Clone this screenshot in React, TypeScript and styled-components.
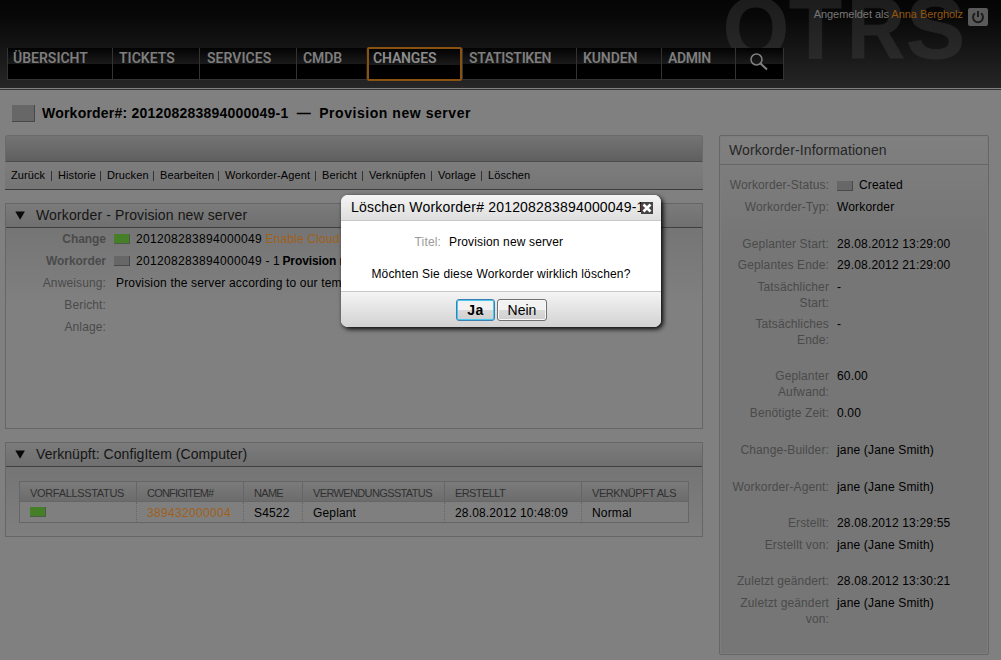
import React from 'react';
import styled, { createGlobalStyle } from 'styled-components';

const Global = createGlobalStyle`
  * { box-sizing: border-box; }
  body { margin: 0; background: #808080; font: 12px/15px "Liberation Sans", Arial, sans-serif; color: #000; overflow: hidden; }
  h1, h2, p, dl, dd, dt { margin: 0; font-weight: normal; }
`;
const Page = styled.div`width: 1001px; height: 660px; position: relative; overflow: hidden; background: #808080;`;
const Header = styled.header`
  height: 90px; padding: 48px 0 0 7px; position: relative; overflow: hidden;
  background: linear-gradient(#050505 0px, #070707 14px, #262626 88px);
  border-bottom: 1px solid #333; box-shadow: inset 0 -1px #808080;
`;
const Logo = styled.svg`position: absolute; left: 715px; top: 0; width: 286px; height: 88px;`;
const Login = styled.div`
  position: absolute; right: 13px; top: 7px; display: flex; align-items: flex-start; gap: 5px;
  color: #777; font-size: 11px; line-height: 14px; letter-spacing: -0.04px;
`;
const User = styled.span`color: #94560f;`;
const Power = styled.span`display: flex; margin-top: 1px; width: 20px; height: 18px; background: #5a5a5a; border-radius: 2px; justify-content: center; align-items: center;`;
const Nav = styled.nav`display: flex; position: relative; height: 32px; width: 777px; border: solid #333; border-width: 0 1px 1px 0;`;
const NavItem = styled.a<{ $w: number; $active?: boolean; $x?: number; $ls?: number }>`
  width: ${p => p.$w}px; height: 31px; padding: 2px 0 0 ${p => p.$x ?? 6}px;
  border-left: 1px solid #333; white-space: nowrap;
  background: linear-gradient(#020202 0, #1b1b1b 16px, #000 16px);
  color: #7e7e7e; font: 600 14px/16px Roboto, sans-serif; letter-spacing: ${p => p.$ls ?? 0}px;
  ${p => p.$active && `height: 34px; margin: -1px 0 0 1px; padding: 1px 0 0 4px; border: 2px solid #8a5210; border-radius: 2px; color: #8c8c8c; position: relative; z-index: 1;`}
`;
const Title = styled.div`display: flex; align-items: center; height: 45px; padding: 2px 0 0 12px; gap: 7px;`;
const Heading = styled.h1`font: bold 14px/18px "Liberation Sans", sans-serif; letter-spacing: 0.22px; white-space: pre; margin-top: -2px;`;
const HeadingName = styled.span`letter-spacing: 0.55px;`;
const Flag = styled.span<{ $green?: boolean; $big?: boolean }>`
  display: inline-block; flex: none; width: ${p => (p.$big ? 23 : 16)}px; height: ${p => (p.$big ? 17 : 10)}px;
  background: ${p => (p.$green ? '#458028' : '#676767')};
  border: solid ${p => (p.$green ? '#4c5a46' : '#484848')}; border-width: 0 1px 1px 0;
`;
const Columns = styled.div`display: grid; grid-template-columns: 698px 270px; column-gap: 16px; padding-left: 5px; align-items: start;`;
const Toolbar = styled.div`height: 27px; background: linear-gradient(#747474, #5f5f5f); border: solid #6a6a6a; border-width: 1px 1px 0; border-bottom: 1px solid #4c4c4c; border-radius: 3px 3px 0 0;`;
const Links = styled.div`height: 28px; display: flex; align-items: center; padding-left: 6px; background: linear-gradient(#7d7d7d, #757575); border-bottom: 1px solid #3c3c3c; font-size: 11px;`;
const Link = styled.a<{ $w: number }>`width: ${p => p.$w}px; display: flex; white-space: nowrap; align-items: center; justify-content: space-between; letter-spacing: 0.1px;
  &:not(:last-child)::after { content: ''; width: 1px; height: 10px; background: #333; margin-right: 6px; }
`;
const Widget = styled.section<{ $h: number }>`height: ${p => p.$h}px; border: 1px solid #666; margin-top: 13px; background: linear-gradient(#757575 25px, #808080 100px);`;
const WidgetHead = styled.div`
  height: 24px; display: flex; align-items: center; padding-left: 9px; gap: 10px; background: linear-gradient(#7b7b7b, #6f6f6f); border-bottom: 1px solid #404040;
  color: #151515; font-size: 14px;
`;
const Caption = styled.h2<{ $ls: number }>`font-size: 14px; letter-spacing: ${p => p.$ls}px;`;
const Facts = styled.dl`display: grid; grid-template-columns: 100px 1fr; column-gap: 8px; grid-auto-rows: 22px; line-height: 22px;`;
const Label = styled.dt<{ $bold?: boolean }>`text-align: right; padding-left: 5px; color: #4a4a4a; font-weight: ${p => (p.$bold ? 'bold' : 'normal')}; letter-spacing: ${p => (p.$bold ? -0.05 : 0.12)}px;`;
const Value = styled.dd<{ $x?: number }>`display: flex; align-items: center; gap: 6px; padding-left: ${p => p.$x || 0}px; white-space: pre; letter-spacing: 0.17px;`;
const Number = styled.span`letter-spacing: 0.32px;`;
const Strong = styled.b`letter-spacing: -0.1px; margin-left: -1px;`;
const Orange = styled.span`color: #a0601a;`;
const Table = styled.div`margin: 14px 0 0 13px; width: 670px; height: 42px; border: 1px solid #666; background: #7f7f7f;`;
const Row = styled.div<{ $head?: boolean }>`
  display: grid; grid-template-columns: 117px 107px 59px 142px 137px 1fr; height: 20px; line-height: 22px;
  ${p => p.$head && 'background: linear-gradient(#7b7b7b, #6c6c6c); border-bottom: 1px solid #666; color: #303030; font-size: 11px;'}
`;
const Cell = styled.span<{ $head?: boolean; $ls?: number }>`padding-left: 10px; height: 20px; white-space: nowrap; letter-spacing: ${p => p.$ls ?? 0.15}px;
  &:not(:last-child) { border-right: 1px ${p => (p.$head ? 'solid' : 'dotted')} #666; }
  ${p => p.$head && 'height: 19px;'}
`;
const Side = styled.aside`height: 520px; border: 1px solid #666; border-radius: 2px; background: linear-gradient(#808080, #767676 100px); box-shadow: inset 0 0 0 1px #7d7d7d;`;
const SideHead = styled.h2`height: 29px; line-height: 29px; padding-left: 9px; border-bottom: 1px solid #666; color: #262626; font-size: 14px; letter-spacing: 0.1px; margin-bottom: 13px;`;
const Info = styled.dl<{ $h: number }>`height: ${p => p.$h}px; display: grid; grid-template-columns: 109px 1fr; column-gap: 8px; line-height: 15.5px; align-items: start;`;
const Dialog = styled.div`
  position: absolute; left: 341px; top: 195px; width: 320px; height: 132px; border-radius: 7px; background: #fff;
  display: flex; flex-direction: column; box-shadow: 2px 2px 5px #000;
`;
const DialogHead = styled.div`height: 26px; display: flex; align-items: center; padding: 0 8px 1px 10px; border-radius: 7px 7px 0 0; background: linear-gradient(#f4f4f4, #dedede); border-bottom: 1px solid #c8c8c8;`;
const DialogTitle = styled.h2`width: 290px; flex: none; white-space: nowrap; font-size: 14px; letter-spacing: 0.19px;`;
const Close = styled.span`display: flex; z-index: 1; flex: none; margin-top: 2px;`;
const DialogBody = styled.div`height: 70px; padding-top: 14px;`;
const Question = styled.p`text-align: center; margin-top: 17px; letter-spacing: 0.16px;`;
const Field = styled.dl`display: grid; grid-template-columns: 100px 1fr; column-gap: 8px; letter-spacing: 0.14px;`;
const Muted = styled.dt`text-align: right; color: #999;`;
const DialogFoot = styled.div`flex: 1; display: flex; justify-content: center; padding: 7px 0 0 1px; gap: 2px; border-top: 1px solid #c8c8c8; border-radius: 0 0 7px 7px; background: linear-gradient(#f4f4f4, #d2d2d2);`;
const Button = styled.button<{ $primary?: boolean }>`
  width: ${p => (p.$primary ? 39 : 50)}px; height: 22px; padding: 0; border-radius: 3px; font: ${p => (p.$primary ? 'bold' : 'normal')} 14px/18px "Liberation Sans", sans-serif;
  letter-spacing: ${p => (p.$primary ? 0.5 : 0)}px;
  border: 1px solid ${p => (p.$primary ? '#3c7fb1' : '#707070')}; background: linear-gradient(#f2f2f2 50%, #dadada 50%, #cfcfcf);
  box-shadow: inset 0 0 0 1px ${p => (p.$primary ? '#48c8f0' : '#f8f8f8')};
`;

const nav: { t: string; w: number; x?: number; ls?: number }[] = [
  { t: 'ÜBERSICHT', w: 105, x: 5, ls: 0 }, { t: 'TICKETS', w: 87 }, { t: 'SERVICES', w: 97, x: 7, ls: 0.05 }, { t: 'CMDB', w: 70, ls: -0.1 },
  { t: 'CHANGES', w: 95, ls: -0.15 }, { t: 'STATISTIKEN', w: 114, ls: -0.3 }, { t: 'KUNDEN', w: 85, ls: -0.1 }, { t: 'ADMIN', w: 74, ls: -0.4 },
];
const links: [string, number][] = [['Zurück', 47], ['Historie', 49], ['Drucken', 53], ['Bearbeiten', 65], ['Workorder-Agent', 97], ['Bericht', 47], ['Verknüpfen', 69], ['Vorlage', 50], ['Löschen', 50]];
const columns: [string, number][] = [['VORFALLSSTATUS', -0.33], ['CONFIGITEM#', -0.8], ['NAME', -0.7], ['VERWENDUNGSSTATUS', -0.63], ['ERSTELLT', -0.6], ['VERKNÜPFT ALS', -0.42]];
const infos: [string, string, number][] = [
  ['Workorder-Status:', 'Created', 22], ['Workorder-Typ:', 'Workorder', 37],
  ['Geplanter Start:', '28.08.2012 13:29:00', 21], ['Geplantes Ende:', '29.08.2012 21:29:00', 22],
  ['Tatsächlicher Start:', '-', 37], ['Tatsächliches Ende:', '-', 52],
  ['Geplanter Aufwand:', '60.00', 37], ['Benötigte Zeit:', '0.00', 37],
  ['Change-Builder:', 'jane (Jane Smith)', 37], ['Workorder-Agent:', 'jane (Jane Smith)', 36],
  ['Erstellt:', '28.08.2012 13:29:55', 22], ['Erstellt von:', 'jane (Jane Smith)', 36],
  ['Zuletzt geändert:', '28.08.2012 13:30:21', 22], ['Zuletzt geändert von:', 'jane (Jane Smith)', 36],
];
const Arrow = () => <svg width="11" height="9" viewBox="0 0 11 9"><path d="M0.3 0.5h9.6L5.1 8.8z" fill="#0a0a0a" /></svg>;

export default function App() {
  return (
    <Page>
      <Global />
      <Header>
        <Logo viewBox="0 0 286 88">
          <defs>
            <linearGradient id="ghost" gradientUnits="userSpaceOnUse" x1="0" y1="0" x2="0" y2="60">
              <stop offset="0" stopColor="#1c1c1c" /><stop offset="1" stopColor="#2a2a2a" />
            </linearGradient>
          </defs>
          <g fill="url(#ghost)" stroke="url(#ghost)" strokeWidth="0.8" fontFamily="Liberation Sans" fontWeight="700" fontSize="88">
            <text x="8" y="58" textLength="66" lengthAdjust="spacingAndGlyphs">O</text>
            <text x="74" y="58" textLength="53" lengthAdjust="spacingAndGlyphs">T</text>
            <text x="132" y="58" textLength="58" lengthAdjust="spacingAndGlyphs">R</text>
            <text x="191" y="58" textLength="59" lengthAdjust="spacingAndGlyphs">S</text>
          </g>
        </Logo>
        <Login>
          <span>Angemeldet als <User>Anna Bergholz</User></span>
          <Power><svg width="14" height="14" viewBox="0 0 14 14" fill="none" stroke="#1c1c1c" strokeWidth="2"><path d="M4 3.2a5 5 0 1 0 6 0M7 1v6" /></svg></Power>
        </Login>
        <Nav>
          {nav.map(n => <NavItem key={n.t} $w={n.w} $x={n.x} $ls={n.ls} $active={n.t === 'CHANGES'}>{n.t}</NavItem>)}
          <NavItem $w={48}>
            <svg width="40" height="24" viewBox="0 0 40 24" fill="none" stroke="#808080"><circle cx="14.5" cy="9.5" r="5.5" strokeWidth="1.5" /><path d="M18.5 13.5l6.5 6" strokeWidth="2" /></svg>
          </NavItem>
        </Nav>
      </Header>
      <Title><Flag $big /><Heading>Workorder#: 201208283894000049-1  —  <HeadingName>Provision new server</HeadingName></Heading></Title>
      <Columns>
        <main>
          <Toolbar />
          <Links>{links.map(([t, w]) => <Link key={t} $w={w}>{t}</Link>)}</Links>
          <Widget $h={226}>
            <WidgetHead><Arrow /><Caption $ls={0.12}>Workorder - Provision new server</Caption></WidgetHead>
            <Facts>
              <Label $bold>Change</Label><Value><Flag $green /><span><Number>201208283894000049</Number> <Orange>Enable Cloud</Orange></span></Value>
              <Label $bold>Workorder</Label><Value><Flag /><span><Number>201208283894000049</Number> - 1 <Strong>Provision new server</Strong></span></Value>
              <Label>Anweisung:</Label><Value $x={2}>Provision the server according to our template</Value>
              <Label>Bericht:</Label><Value />
              <Label>Anlage:</Label><Value />
            </Facts>
          </Widget>
          <Widget $h={95}>
            <WidgetHead><Arrow /><Caption $ls={0.06}>Verknüpft: ConfigItem (Computer)</Caption></WidgetHead>
            <Table>
              <Row $head>{columns.map(([t, ls]) => <Cell key={t} $head $ls={ls}>{t}</Cell>)}</Row>
              <Row><Cell><Flag $green /></Cell><Cell $ls={0.33}><Orange>389432000004</Orange></Cell><Cell>S4522</Cell><Cell>Geplant</Cell><Cell>28.08.2012 10:48:09</Cell><Cell>Normal</Cell></Row>
            </Table>
          </Widget>
        </main>
        <Side>
          <SideHead>Workorder-Informationen</SideHead>
          {infos.map(([l, v, h]) => <Info key={l} $h={h}><Label>{l}</Label><Value>{v === 'Created' && <Flag />}{v}</Value></Info>)}
        </Side>
      </Columns>
      <Dialog>
        <DialogHead>
          <DialogTitle>Löschen Workorder# 201208283894000049-1</DialogTitle>
          <Close><svg width="12" height="12" viewBox="0 0 12 12"><path fill="#444" d="M0 0h12v12H0z" /><path d="M2.5 2.5l7 7m0-7l-7 7" stroke="#fff" strokeWidth="2.6" /></svg></Close>
        </DialogHead>
        <DialogBody>
          <Field><Muted>Titel:</Muted><dd>Provision new server</dd></Field>
          <Question>Möchten Sie diese Workorder wirklich löschen?</Question>
        </DialogBody>
        <DialogFoot><Button $primary>Ja</Button><Button>Nein</Button></DialogFoot>
      </Dialog>
    </Page>
  );
}
